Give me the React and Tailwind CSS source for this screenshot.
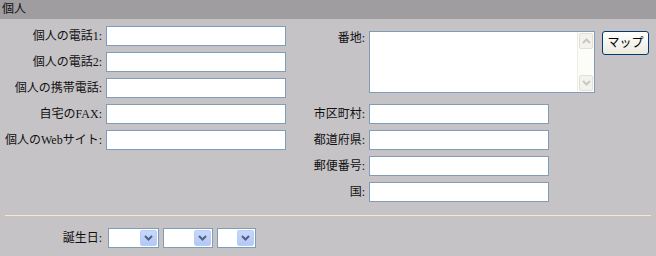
const labelCls = 'text-right text-[12px] leading-[20px] text-[#111] whitespace-nowrap';
const inputCls = 'block h-[20px] w-[180px] bg-white border border-[#7f9db9] outline-none';

function Field({ label, labelWidth }) {
  return (
    <div className="flex h-[20px] items-center gap-[4px]">
      <div className={labelCls} style={{ width: labelWidth }}>{label}</div>
      <input type="text" className={inputCls} />
    </div>
  );
}

function Chevron({ color }) {
  return (
    <svg width="9" height="6" viewBox="0 0 9 6">
      <path d="M1 1 L4.5 4.5 L8 1" fill="none" stroke={color} strokeWidth="2" />
    </svg>
  );
}

function Select({ width }) {
  return (
    <div className="flex h-[20px] border border-[#7f9db9] bg-white p-[1px]" style={{ width }}>
      <div className="flex-1" />
      <div className="flex w-[17px] items-center justify-center rounded-[2px] border border-[#b9cdf6] bg-gradient-to-b from-[#c8d8fb] to-[#b4c8f6]">
        <Chevron color="#4d6185" />
      </div>
    </div>
  );
}

function Address() {
  return (
    <div className="flex h-[62px] w-[226px] border border-[#7f9db9] bg-white">
      <div className="flex-1" />
      <div className="flex w-[17px] flex-col justify-between border-l border-[#eeede5] bg-[#fcfcf9] p-[1px]">
        <div className="flex h-[16px] items-center justify-center rounded-[2px] border border-[#e2e0d6] bg-[#f3f2ec]">
          <svg width="9" height="6" viewBox="0 0 9 6">
            <path d="M1 5 L4.5 1.5 L8 5" fill="none" stroke="#c9c8c0" strokeWidth="2" />
          </svg>
        </div>
        <div className="flex h-[16px] items-center justify-center rounded-[2px] border border-[#e2e0d6] bg-[#f3f2ec]">
          <Chevron color="#c9c8c0" />
        </div>
      </div>
    </div>
  );
}

export default function App() {
  return (
    <div
      className="h-[256px] w-[656px] overflow-hidden bg-[#c5c3c6] text-[12px] text-[#111]"
      style={{ fontFamily: '"Liberation Serif", "Noto Sans CJK JP", serif' }}
    >
      <div className="h-[19px] bg-[#9f9d9f] pl-[2px] text-[12px] leading-[19px]">個人</div>

      <div className="flex">
        <div className="flex w-[300px] flex-col gap-[6px] pt-[7px]">
          <Field label="個人の電話1:" labelWidth={102} />
          <Field label="個人の電話2:" labelWidth={102} />
          <Field label="個人の携帯電話:" labelWidth={102} />
          <Field label="自宅のFAX:" labelWidth={102} />
          <Field label="個人のWebサイト:" labelWidth={102} />
        </div>

        <div className="flex flex-col pt-[12px]">
          <div className="flex items-start gap-[4px]">
            <div className={labelCls + ' -mt-[3px] w-[65px] leading-[12px]'}>番地:</div>
            <Address />
            <button className="ml-[3px] h-[24px] w-[47px] rounded-[3px] border border-[#003c74] bg-gradient-to-b from-[#ffffff] to-[#ece9de] text-[12px] text-black">
              マップ
            </button>
          </div>
          <div className="mt-[11px] flex flex-col gap-[6px]">
            <Field label="市区町村:" labelWidth={65} />
            <Field label="都道府県:" labelWidth={65} />
            <Field label="郵便番号:" labelWidth={65} />
            <Field label="国:" labelWidth={65} />
          </div>
        </div>
      </div>

      <div className="mx-[5px] mt-[12px] w-[646px] border-t border-b border-t-[#cbc2b0] border-b-[#ede8da]" />

      <div className="mt-[12px] flex items-center gap-[6px]">
        <div className={labelCls + ' w-[102px]'}>誕生日:</div>
        <div className="flex gap-[4px]">
          <Select width={51} />
          <Select width={50} />
          <Select width={39} />
        </div>
      </div>
    </div>
  );
}
